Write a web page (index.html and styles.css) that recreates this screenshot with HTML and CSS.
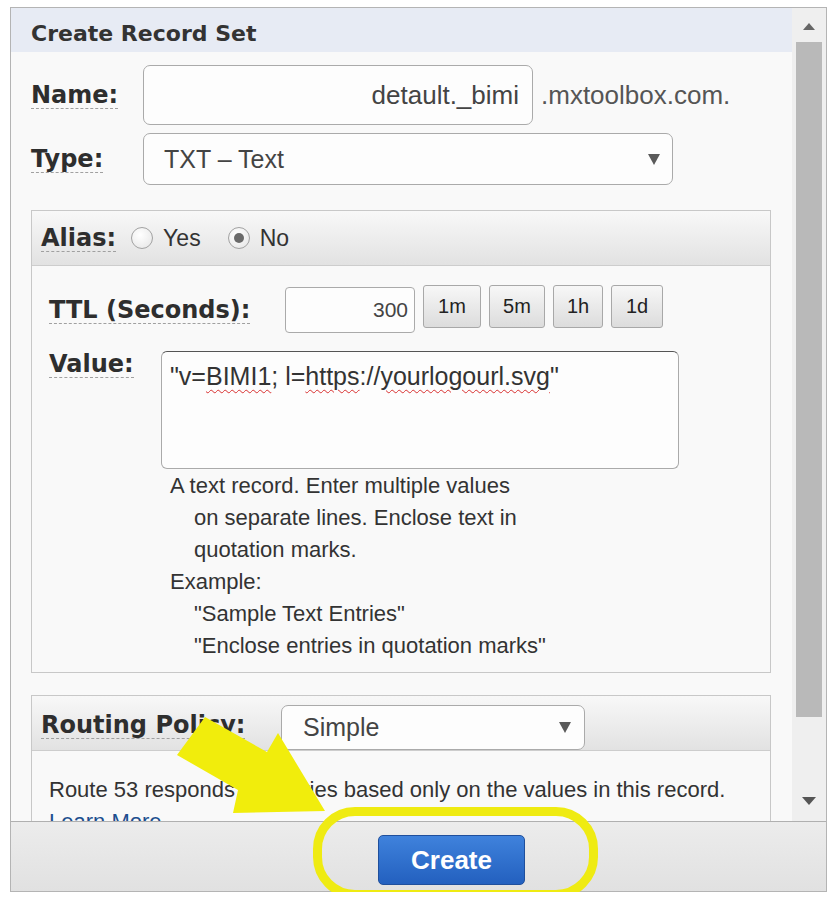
FILE: index.html
```html
<!DOCTYPE html>
<html lang="en">
<head>
    <meta charset="UTF-8">
    <title>Create Record Set</title>
    <link rel="stylesheet" href="styles.css">
</head>
<body>

    <div class="dialog">
        <div class="dialog-main">
            <div class="dialog-body">
                <div class="dialog-title">Create Record Set</div>

                <div class="form">
                    <div class="row row-name">
                        <span class="lbl-col name-col"><span class="lbl">Name:</span></span>
                        <div class="field name-field">detault._bimi</div>
                        <span class="suffix">.mxtoolbox.com.</span>
                    </div>

                    <div class="row row-type">
                        <span class="lbl-col name-col"><span class="lbl">Type:</span></span>
                        <div class="field select type-select"><span>TXT – Text</span><i class="caret"></i></div>
                    </div>

                    <div class="box">
                        <div class="box-head alias-head">
                            <span class="lbl">Alias:</span>
                            <span class="radio"></span><span class="radio-text">Yes</span>
                            <span class="radio checked"></span><span class="radio-text">No</span>
                        </div>
                        <div class="box-body">
                            <div class="row row-ttl">
                                <span class="lbl-col ttl-col"><span class="lbl">TTL (Seconds):</span></span>
                                <div class="field ttl-field">300</div>
                                <button class="ttl-btn w58">1m</button>
                                <button class="ttl-btn w56">5m</button>
                                <button class="ttl-btn w50">1h</button>
                                <button class="ttl-btn w52">1d</button>
                            </div>
                            <div class="row row-value">
                                <span class="lbl-col value-col"><span class="lbl">Value:</span></span>
                                <div class="field value-field">"v=<span class="typo">BIMI1</span>; l=<span class="typo">https</span>://<span class="typo">yourlogourl.svg</span>"</div>
                            </div>
                            <div class="help">
                                <p class="hang">A text record. Enter multiple values<br>on separate lines. Enclose text in<br>quotation marks.</p>
                                <p class="hang">Example:<br>"Sample Text Entries"<br>"Enclose entries in quotation marks"</p>
                            </div>
                        </div>
                    </div>

                    <div class="box">
                        <div class="box-head routing-head">
                            <span class="lbl-col routing-col"><span class="lbl">Routing Policy:</span></span>
                            <div class="field select routing-select"><span>Simple</span><i class="caret"></i></div>
                        </div>
                        <div class="box-body route-text">
                            Route 53 responds to queries based only on the values in this record.<br>
                            <a href="#">Learn More</a>
                        </div>
                    </div>
                </div>
            </div>

            <div class="scrollbar">
                <div class="sb-btn"><i class="sb-up"></i></div>
                <div class="sb-thumb"></div>
                <div class="sb-rest"><i class="sb-down"></i></div>
            </div>
        </div>

        <div class="dialog-foot">
            <button class="btn-create">Create</button>
        </div>

        <div class="highlight"></div>
    </div>

    <svg class="arrow" viewBox="0 0 836 902" width="836" height="902">
        <polygon points="205,717 267,752 278,733 325,811 233,813 238,790 177,755" fill="#f1ed0c"/>
    </svg>

</body>
</html>
```

FILE: styles.css
```css
body {
    margin: 0;
    background-color: #fff;
    font-family: "Liberation Sans", Arial, sans-serif;
    color: #333;
}
.dialog {
    position: relative;
    box-sizing: border-box;
    width: 817px;
    margin: 7px 0 0 10px;
    border: 1px solid #b4b4b4;
    background-color: #f9f9f9;
}
.dialog-main {
    display: flex;
    height: 813px;
}
.dialog-body {
    flex: 1;
    overflow: hidden;
}
.dialog-title {
    height: 26px;
    padding: 13px 0 5px 20px;
    background-color: #e7ebf4;
    font-family: "DejaVu Sans", Verdana, sans-serif;
    font-weight: bold;
    font-size: 22px;
    line-height: 26px;
    color: #333;
}
.form {
    padding: 13px 21px 0 20px;
}
.row {
    display: flex;
    align-items: center;
}
.lbl-col {
    flex-shrink: 0;
}
.lbl {
    display: inline-block;
    font-family: "DejaVu Sans", Verdana, sans-serif;
    font-weight: bold;
    font-size: 24px;
    line-height: 26px;
    color: #2e2e2e;
    border-bottom: 1px dashed #a0a0a0;
}
.name-col { width: 112px; }
.ttl-col { width: 236px; }
.value-col { width: 112px; }
.routing-col { width: 240px; }

.field {
    box-sizing: border-box;
    border: 1px solid #aaa;
    border-radius: 7px;
    background-color: #fdfdfd;
    color: #444;
}
.name-field {
    width: 390px;
    height: 60px;
    padding-right: 13px;
    text-align: right;
    font-size: 26px;
    line-height: 58px;
}
.suffix {
    margin-left: 8px;
    font-size: 26px;
    color: #555;
}
.row-type {
    margin-top: 8px;
}
.select {
    display: flex;
    align-items: center;
    justify-content: space-between;
    font-size: 25px;
}
.type-select {
    width: 530px;
    height: 52px;
    padding: 0 12px 0 20px;
}
.caret {
    width: 0;
    height: 0;
    border-left: 6px solid transparent;
    border-right: 6px solid transparent;
    border-top: 11px solid #5a5a5a;
}

.box {
    margin-top: 25px;
    border: 1px solid #c8c8c8;
    background-color: #f9f9f9;
}
.box + .box {
    margin-top: 22px;
}
.box-head {
    display: flex;
    height: 54px;
    padding-left: 9px;
    border-bottom: 1px solid #cdcdcd;
    background: linear-gradient(#f8f8f8, #e2e2e2);
}
.alias-head {
    align-items: center;
}
.radio {
    box-sizing: border-box;
    display: flex;
    align-items: center;
    justify-content: center;
    width: 22px;
    height: 22px;
    margin-left: 15px;
    border: 1px solid #a2a2a2;
    border-radius: 50%;
    background: radial-gradient(circle at 40% 35%, #ffffff, #e4e4e4);
}
.radio.checked {
    margin-left: 27px;
}
.radio.checked::after {
    content: "";
    width: 10px;
    height: 10px;
    border-radius: 50%;
    background-color: #6a6a6a;
}
.radio-text {
    margin-left: 10px;
    font-size: 23px;
    color: #333;
}
.alias-head .lbl + .radio {
    margin-left: 15px;
}

.box-body {
    padding: 19px 17px 10px 17px;
}
.row-ttl {
    align-items: flex-start;
}
.row-ttl .lbl-col {
    margin-top: 12px;
}
.ttl-field {
    width: 130px;
    height: 46px;
    margin-top: 2px;
    padding-right: 6px;
    border-radius: 4px;
    text-align: right;
    font-size: 21px;
    line-height: 44px;
}
.ttl-btn {
    height: 43px;
    margin-left: 8px;
    padding: 0;
    border: 1px solid #a8a8a8;
    border-radius: 3px;
    background: linear-gradient(#f7f7f7, #dcdcdc);
    font-family: "Liberation Sans", Arial, sans-serif;
    font-size: 20px;
    color: #222;
}
.w58 { width: 58px; }
.w56 { width: 56px; }
.w50 { width: 50px; }
.w52 { width: 52px; }

.row-value {
    align-items: flex-start;
    margin-top: 18px;
}
.value-field {
    width: 518px;
    height: 118px;
    padding: 9px 8px;
    border-color: #aaa;
    border-top-color: #555;
    border-radius: 6px;
    font-size: 25px;
    line-height: 30px;
    color: #333;
}
.typo {
    text-decoration: underline wavy #d83030;
    text-decoration-thickness: 1px;
    text-underline-offset: 4px;
}
.help {
    margin: 1px 0 0 121px;
    font-size: 22px;
    line-height: 32px;
    color: #333;
}
.hang {
    margin: 0;
    padding-left: 24px;
    text-indent: -24px;
}

.routing-head .lbl-col {
    margin-top: 16px;
}
.routing-select {
    width: 304px;
    height: 45px;
    margin-top: 9px;
    padding: 0 13px 0 21px;
}
.route-text {
    padding-top: 23px;
    font-size: 22px;
    line-height: 32px;
}
.route-text a {
    color: #1d4f8f;
    text-decoration: none;
}

.scrollbar {
    display: flex;
    flex-direction: column;
    width: 34px;
    background-color: #efefef;
}
.sb-btn {
    display: flex;
    justify-content: center;
    height: 34px;
    padding-top: 15px;
    box-sizing: border-box;
}
.sb-up {
    width: 0;
    height: 0;
    border-left: 6px solid transparent;
    border-right: 6px solid transparent;
    border-bottom: 7px solid #666;
}
.sb-thumb {
    height: 675px;
    margin: 0 4px;
    background-color: #b9b9b9;
}
.sb-rest {
    flex: 1;
    display: flex;
    align-items: flex-end;
    justify-content: center;
    padding-bottom: 16px;
}
.sb-down {
    width: 0;
    height: 0;
    border-left: 7px solid transparent;
    border-right: 7px solid transparent;
    border-top: 8px solid #555;
}

.dialog-foot {
    height: 70px;
    padding: 13px 0 0 367px;
    box-sizing: border-box;
    border-top: 1px solid #b0b0b0;
    background: linear-gradient(#ececec, #e1e1e1);
}
.btn-create {
    width: 147px;
    height: 50px;
    border: 1px solid #1f4f9c;
    border-radius: 5px;
    background: linear-gradient(#3f82dc, #2360bf);
    font-family: "Liberation Sans", Arial, sans-serif;
    font-weight: bold;
    font-size: 26px;
    color: #fff;
}
.highlight {
    position: absolute;
    left: 302px;
    top: 799px;
    box-sizing: border-box;
    width: 285px;
    height: 92px;
    border: 9px solid #efeb12;
    border-radius: 42px;
}
.arrow {
    position: absolute;
    left: 0;
    top: 0;
    pointer-events: none;
}
```
